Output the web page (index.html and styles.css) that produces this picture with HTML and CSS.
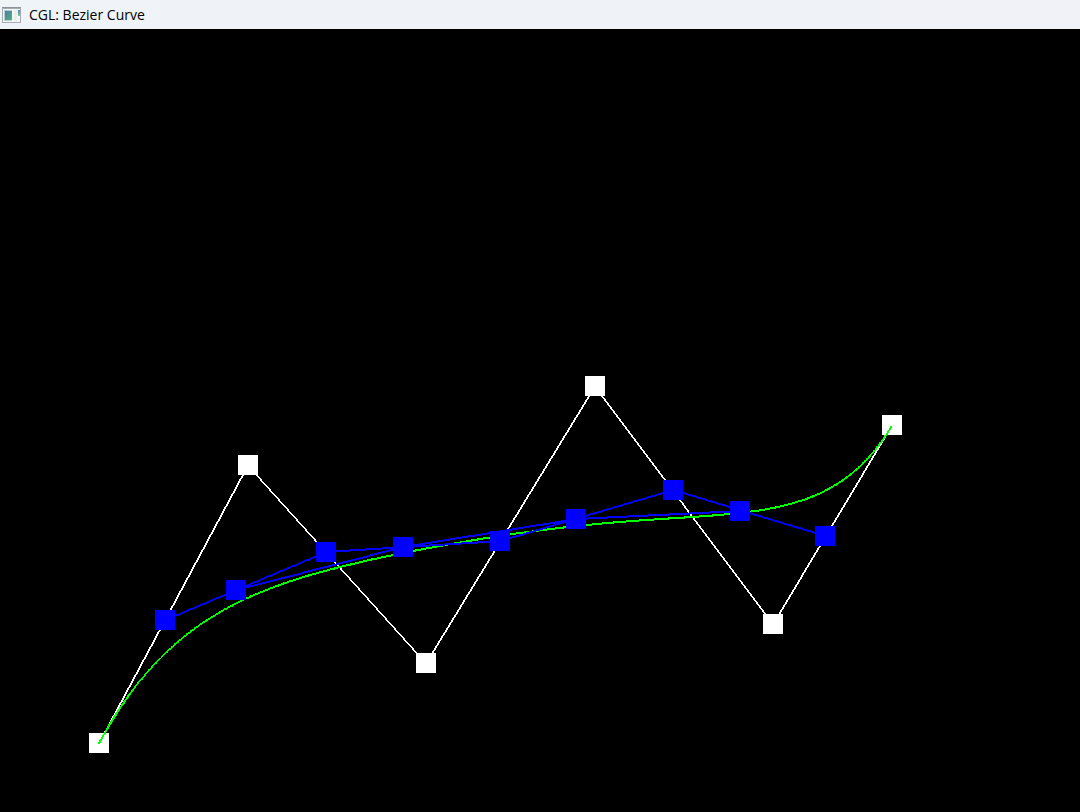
FILE: index.html
```html
<!DOCTYPE html>
<html lang="en">
<head>
  <meta charset="UTF-8">
  <title>CGL: Bezier Curve</title>
  <link rel="stylesheet" href="styles.css">
</head>
<body>
  <header class="titlebar">
    <svg class="app-icon" width="19" height="16" viewBox="0 0 19 16" aria-hidden="true">
      <defs>
        <linearGradient id="pane" x1="0" y1="0" x2="1" y2="1">
          <stop offset="0" stop-color="#4a7fa8"/>
          <stop offset="1" stop-color="#52b07c"/>
        </linearGradient>
        <linearGradient id="side" x1="0" y1="0" x2="0" y2="1">
          <stop offset="0" stop-color="#4c86c4"/>
          <stop offset="1" stop-color="#7fc998"/>
        </linearGradient>
      </defs>
      <rect width="19" height="16" fill="#a4abb3"/>
      <rect width="19" height="1" fill="#8a929c"/>
      <rect x="1" y="2" width="17" height="13" fill="#f6f8f8"/>
      <rect x="2" y="3" width="8" height="11" fill="#b4d0cc"/>
      <rect x="3" y="4" width="7" height="9" fill="url(#pane)"/>
      <rect x="12" y="3" width="3" height="11" fill="#e9eeeb"/>
      <rect x="16" y="3" width="2" height="6" fill="url(#side)"/>
    </svg>
    <h1>CGL: Bezier Curve</h1>
  </header>
  <main>
    <canvas id="view"></canvas>
  </main>
  <script src="script.js"></script>
</body>
</html>
```
FILE: styles.css
```css
* { box-sizing: border-box; }
body { margin: 0; height: 100vh; display: flex; flex-direction: column; background: #000; font-family: "Open Sans", "Noto Sans", sans-serif; }
.titlebar { display: flex; align-items: center; gap: 8px; height: 29px; padding: 0 2px; flex: none; background: linear-gradient(to right, #eff4f9, #f0f2f7); }
.app-icon { display: block; flex: none; }
h1 { margin: 0; font-size: 14px; line-height: 20px; font-weight: normal; color: #000; }
main { flex: 1; min-height: 0; overflow: hidden; }
canvas { display: block; }
```
FILE: script.js
```js
const canvas = document.getElementById('view');
const ctx = canvas.getContext('2d');

const SIZE = 20;
const STEPS = 1000;

// control points
const control = [[99, 714], [248, 436], [426, 634], [595, 357], [773, 595], [892, 396]];

// first two levels of the de Casteljau construction at t = 0.44
const level1 = [[165, 591], [326, 523], [500, 512], [673, 461], [825, 507]];
const level2 = [[236, 561], [403, 518], [576, 490], [740, 482]];

// plain DDA line, 2px thick and not smoothed
function line(a, b) {
  const dx = b[0] - a[0];
  const dy = b[1] - a[1];
  const flat = Math.abs(dx) >= Math.abs(dy);
  const n = Math.ceil(Math.max(Math.abs(dx), Math.abs(dy)));
  for (let i = 0; i < n; i++) {
    const x = Math.round(a[0] + dx * i / n);
    const y = Math.round(a[1] + dy * i / n);
    if (flat) ctx.fillRect(x, y - 1, 1, 2);
    else ctx.fillRect(x - 1, y, 2, 1);
  }
}

function polyline(points, color) {
  ctx.fillStyle = color;
  for (let i = 1; i < points.length; i++) line(points[i - 1], points[i]);
}

function squares(points, color) {
  ctx.fillStyle = color;
  points.forEach(([x, y]) => ctx.fillRect(x - SIZE / 2, y - SIZE / 2, SIZE, SIZE));
}

function bezier(points, t) {
  if (points.length === 1) return points[0];
  const next = [];
  for (let i = 1; i < points.length; i++) {
    const [x0, y0] = points[i - 1];
    const [x1, y1] = points[i];
    next.push([x0 + (x1 - x0) * t, y0 + (y1 - y0) * t]);
  }
  return bezier(next, t);
}

function draw() {
  canvas.width = canvas.parentElement.clientWidth;
  canvas.height = canvas.parentElement.clientHeight;

  polyline(control, '#fff');
  squares(control, '#fff');

  const curve = [];
  for (let i = 0; i <= STEPS; i++) {
    const [x, y] = bezier(control, i / STEPS);
    curve.push([x, y]);
  }
  polyline(curve, '#0f0');

  polyline(level1, '#00f');
  polyline(level2, '#00f');
  squares(level1, '#00f');
  squares(level2, '#00f');
}

window.addEventListener('resize', draw);
draw();
```
